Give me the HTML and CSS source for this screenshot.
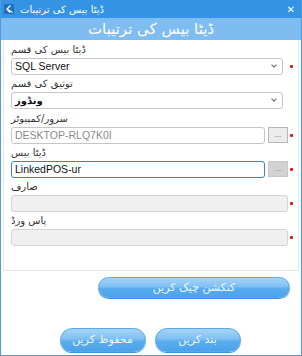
FILE: index.html
```html
<!DOCTYPE html>
<html>
<head>
<meta charset="utf-8">
<link rel="stylesheet" href="styles.css">
</head>
<body>
<div class="window">
  <div class="titlebar">
    <svg class="appicon" width="10" height="10" viewBox="0 0 10 10">
      <rect x="0" y="0" width="10" height="10" fill="#1f6fb8"/>
      <path d="M6.5 1.5 L3 5 L6 8.5 M3 5 L8.5 8.5" stroke="#fff" stroke-width="1.3" fill="none"/>
    </svg>
    <span class="title-text">ڈیٹا بیس کی ترتیبات</span>
    <span class="close">✕</span>
  </div>
  <div class="header">ڈیٹا بیس کی ترتیبات</div>
  <div class="panel">
    <div class="field">
      <div class="label">ڈیٹا بیس کی قسم</div>
      <div class="row">
        <div class="select">SQL Server<span class="chev"></span></div>
        <span class="star"></span>
      </div>
    </div>
    <div class="field">
      <div class="label">توثیق کی قسم</div>
      <div class="row">
        <div class="select bold">ونڈوز<span class="chev"></span></div>
        <span class="nostar"></span>
      </div>
    </div>
    <div class="field">
      <div class="label">سرور/کمپیوٹر</div>
      <div class="row">
        <div class="input muted">DESKTOP-RLQ7K0I</div>
        <div class="dots">...</div>
        <span class="star"></span>
      </div>
    </div>
    <div class="field">
      <div class="label">ڈیٹا بیس</div>
      <div class="row">
        <div class="input focus">LinkedPOS-ur</div>
        <div class="dots disabled">...</div>
        <span class="star"></span>
      </div>
    </div>
    <div class="field">
      <div class="label">صارف</div>
      <div class="row">
        <div class="input disabled-input"></div>
        <span class="star"></span>
      </div>
    </div>
    <div class="field">
      <div class="label">پاس ورڈ</div>
      <div class="row">
        <div class="input disabled-input"></div>
        <span class="star"></span>
      </div>
    </div>
  </div>
  <div class="check-row">
    <div class="btn btn-wide">کنکشن چیک کریں</div>
  </div>
  <div class="bottom-row">
    <div class="btn btn-small">محفوظ کریں</div>
    <div class="btn btn-small">بند کریں</div>
  </div>
</div>
</body>
</html>
```

FILE: styles.css
```css
* { box-sizing: border-box; }
html, body { margin: 0; padding: 0; }
body {
  width: 302px;
  height: 356px;
  overflow: hidden;
  background: #ffffff;
  font-family: "DejaVu Sans", "Liberation Sans", sans-serif;
}
.window {
  width: 302px;
  height: 356px;
  border: 1px solid #4a9be0;
  border-top: none;
  background: #ffffff;
  display: flex;
  flex-direction: column;
}
.titlebar {
  height: 18px;
  background: #3593e3;
  display: flex;
  align-items: center;
  padding-left: 3px;
  padding-right: 6px;
  color: #ffffff;
}
.appicon { display: block; }
.title-text {
  margin-left: 6px;
  font-size: 10px;
  flex: 1;
}
.close {
  font-size: 10px;
  font-family: "DejaVu Sans", sans-serif;
  color: #ffffff;
}
.header {
  height: 22px;
  background: #7fbcf0;
  color: #ffffff;
  font-size: 15px;
  text-align: center;
  line-height: 22px;
}
.panel {
  margin: 0 2px;
  border: 1px solid #e2e6ea;
  border-top: none;
  padding: 2px 0 24px 7px;
  height: 231px;
}
.field { height: 34.3px; display: flex; flex-direction: column; }
.label {
  height: 16px;
  font-size: 10px;
  line-height: 16px;
  color: #333333;
}
.row {
  display: flex;
  align-items: center;
  height: 17px;
}
.select {
  flex: 1;
  height: 17px;
  margin-right: 5px;
  border: 1px solid #c6c6c6;
  border-radius: 3px;
  background: #ffffff;
  font-family: "Liberation Sans", "DejaVu Sans", sans-serif;
  font-size: 10.5px;
  line-height: 15px;
  padding-left: 3px;
  color: #111111;
  position: relative;
}
.select.bold { font-family: "DejaVu Sans", sans-serif; font-weight: bold; font-size: 10px; }
.chev {
  position: absolute;
  right: 6px;
  top: 4px;
  width: 4px;
  height: 4px;
  border-right: 1px solid #666;
  border-bottom: 1px solid #666;
  transform: rotate(45deg);
}
.input {
  flex: 1;
  height: 17px;
  border: 1px solid #c6c6c6;
  border-radius: 3px;
  background: #ffffff;
  font-family: "Liberation Sans", "DejaVu Sans", sans-serif;
  font-size: 10.5px;
  line-height: 15px;
  padding-left: 3px;
  color: #111111;
}
.input.muted { color: #8a8a8a; }
.input.focus { border-color: #3a7fd0; }
.input.disabled-input { background: #f0f0f0; border-color: #d4d4d4; }
.dots {
  width: 20px;
  height: 16px;
  margin-left: 3px;
  border: 1px solid #b8b8b8;
  background: #ececec;
  font-size: 8px;
  color: #555;
  text-align: center;
  line-height: 14px;
  font-family: "Liberation Sans", sans-serif;
}
.dots.disabled { background: #d2d2d2; border-color: #c8c8c8; color: #888; }
.star {
  width: 10px;
  height: 17px;
  position: relative;
}
.star::after {
  content: "";
  position: absolute;
  left: 2px;
  top: 7px;
  width: 3px;
  height: 3px;
  background: #ee1111;
  border-radius: 1px;
}
.nostar { width: 10px; }
.check-row {
  display: flex;
  justify-content: flex-end;
  padding: 6px 11px 0 0;
}
.btn {
  border: 1px solid #5aa8e6;
  border-radius: 11px;
  background: linear-gradient(#a6d4f8, #7fc0f2 45%, #5aaeee 55%, #4aa3ea);
  color: #eef6fe;
  font-size: 11px;
  text-align: center;
  box-shadow: 0 1px 0 #3d8fd6;
}
.btn-wide {
  width: 192px;
  height: 21px;
  line-height: 19px;
}
.bottom-row {
  display: flex;
  justify-content: center;
  gap: 9px;
  margin-top: 30px;
  padding-right: 2px;
}
.btn-small {
  width: 86px;
  height: 24px;
  line-height: 22px;
  border-radius: 12px;
}
```
